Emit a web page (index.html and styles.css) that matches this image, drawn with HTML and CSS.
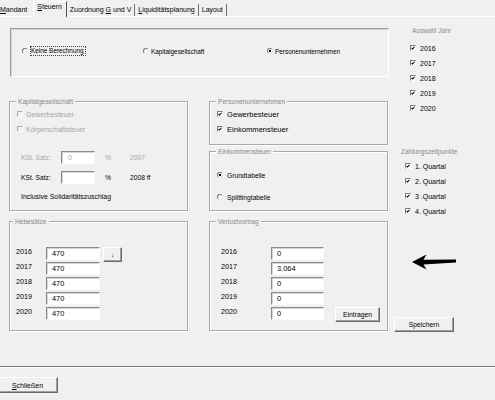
FILE: index.html
```html
<!DOCTYPE html>
<html lang="de">
<head>
  <meta charset="UTF-8">
  <title>Steuern</title>
  <link rel="stylesheet" href="styles.css">
</head>
<body>
  <div class="tabs">
    <div class="tab"><u>M</u>andant</div>
    <div class="tab active"><u>S</u>teuern</div>
    <div class="tab">Zuordnung <u>G</u> und V</div>
    <div class="tab"><u>L</u>iquiditätsplanung</div>
    <div class="tab">Layout</div>
  </div>

  <div class="page">
    <div class="main">
      <!-- Rechtsform -->
      <div class="modes">
        <div class="opt opt-none"><span class="rb"></span><span class="focus">Keine Berechnung</span></div>
        <div class="opt opt-kap"><span class="rb"></span>Kapitalgesellschaft</div>
        <div class="opt"><span class="rb on"></span>Personenunternehmen</div>
      </div>

      <div class="grid">
        <div class="frame kap">
          <span class="frame-title">Kapitalgesellschaft</span>
          <div class="chk off"><span class="cb off"></span>Gewerbesteuer</div>
          <div class="chk off second"><span class="cb off"></span>Körperschaftsteuer</div>
          <div class="kst kst-first off">
            <span class="kst-label">KSt. Satz:</span>
            <span class="tb tb-kst grey">0</span>
            <span class="pct">%</span>
            <span class="kst-year">2007</span>
          </div>
          <div class="kst kst-second">
            <span class="kst-label">KSt. Satz:</span>
            <span class="tb tb-kst"></span>
            <span class="pct">%</span>
            <span class="kst-year">2008 ff</span>
          </div>
          <div class="note">Inclusive Solidaritätszuschlag</div>
        </div>

        <div class="stack">
          <div class="frame pers">
            <span class="frame-title">Personenunternehmen</span>
            <div class="chk"><span class="cb"><svg viewBox="0 0 5 5"><path d="M0.7 2.3 L2 3.8 L4.4 0.9"/></svg></span>Gewerbesteuer</div>
            <div class="chk"><span class="cb"><svg viewBox="0 0 5 5"><path d="M0.7 2.3 L2 3.8 L4.4 0.9"/></svg></span>Einkommensteuer</div>
          </div>
          <div class="frame est">
            <span class="frame-title">Einkommensteuer</span>
            <div class="opt"><span class="rb on"></span>Grundtabelle</div>
            <div class="opt"><span class="rb"></span>Splittingtabelle</div>
          </div>
        </div>

        <div class="frame vals hebe">
          <span class="frame-title">Hebesätze</span>
          <div class="vrow"><span class="yr">2016</span><span class="tb">470</span><button class="btn down">↓</button></div>
          <div class="vrow"><span class="yr">2017</span><span class="tb">470</span></div>
          <div class="vrow"><span class="yr">2018</span><span class="tb">470</span></div>
          <div class="vrow"><span class="yr">2019</span><span class="tb">470</span></div>
          <div class="vrow"><span class="yr">2020</span><span class="tb">470</span></div>
        </div>

        <div class="frame vals verlust">
          <span class="frame-title">Verlustvortrag</span>
          <div class="vrow"><span class="yr">2016</span><span class="tb">0</span></div>
          <div class="vrow"><span class="yr">2017</span><span class="tb">3.064</span></div>
          <div class="vrow"><span class="yr">2018</span><span class="tb">0</span></div>
          <div class="vrow"><span class="yr">2019</span><span class="tb">0</span></div>
          <div class="vrow"><span class="yr">2020</span><span class="tb">0</span><button class="btn enter">Eintragen</button></div>
        </div>
      </div>
    </div>

    <div class="side">
      <div class="side-title t-years">Auswahl Jahr</div>
      <div class="list years">
        <div class="chk"><span class="cb"><svg viewBox="0 0 5 5"><path d="M0.7 2.3 L2 3.8 L4.4 0.9"/></svg></span>2016</div>
        <div class="chk"><span class="cb"><svg viewBox="0 0 5 5"><path d="M0.7 2.3 L2 3.8 L4.4 0.9"/></svg></span>2017</div>
        <div class="chk"><span class="cb"><svg viewBox="0 0 5 5"><path d="M0.7 2.3 L2 3.8 L4.4 0.9"/></svg></span>2018</div>
        <div class="chk"><span class="cb"><svg viewBox="0 0 5 5"><path d="M0.7 2.3 L2 3.8 L4.4 0.9"/></svg></span>2019</div>
        <div class="chk"><span class="cb"><svg viewBox="0 0 5 5"><path d="M0.7 2.3 L2 3.8 L4.4 0.9"/></svg></span>2020</div>
      </div>

      <div class="side-title t-pay">Zahlungszeitpunkte</div>
      <div class="list quarters">
        <div class="chk"><span class="cb"><svg viewBox="0 0 5 5"><path d="M0.7 2.3 L2 3.8 L4.4 0.9"/></svg></span>1. Quartal</div>
        <div class="chk"><span class="cb"><svg viewBox="0 0 5 5"><path d="M0.7 2.3 L2 3.8 L4.4 0.9"/></svg></span>2. Quartal</div>
        <div class="chk"><span class="cb"><svg viewBox="0 0 5 5"><path d="M0.7 2.3 L2 3.8 L4.4 0.9"/></svg></span>3 .Quartal</div>
        <div class="chk"><span class="cb"><svg viewBox="0 0 5 5"><path d="M0.7 2.3 L2 3.8 L4.4 0.9"/></svg></span>4. Quartal</div>
      </div>

      <svg class="arrow" viewBox="0 0 44 16"><path d="M0 8 L14.5 0.5 L11.5 5.8 L44 5.6 L44 8.6 L11.5 10.4 L14.5 15.5 Z"/></svg>

      <button class="btn save">Speichern</button>
    </div>
  </div>

  <div class="footer">
    <button class="btn close"><u>S</u>chließen</button>
  </div>
</body>
</html>
```

FILE: styles.css
```css
body {
  margin: 0;
  width: 495px;
  height: 400px;
  overflow: hidden;
  background: #f0f0f0;
  font-family: "Liberation Sans", Arial, sans-serif;
  font-size: 7px;
  color: #000;
}

/* tab strip */
.tabs {
  display: flex;
  align-items: flex-end;
  height: 16px;
  border-bottom: 1px solid #fff;
}
.tab {
  height: 12px;
  line-height: 11px;
  padding: 0 3px;
  border-right: 1px solid #6e6e6e;
  white-space: nowrap;
}
.tab:first-child {
  padding: 0 6px 0 0;
  border-right: none;
}
.tab.active {
  height: 15px;
  line-height: 9px;
  padding: 0 4px 0 3px;
  margin-bottom: -1px;
  background: #f0f0f0;
  border-top: 1px solid #fff;
  border-left: 1px solid #fff;
  border-right-color: #505050;
}

.page {
  display: flex;
  height: 349px;
}
.main {
  width: 380px;
  padding-left: 9px;
}

/* top radio frame, sunken */
.modes {
  box-sizing: border-box;
  width: 379px;
  height: 49px;
  margin: 11px 0 0 1px;
  padding: 17px 0 0 11px;
  border: 1px solid;
  border-color: #9c9c9c #fff #fff #9c9c9c;
  box-shadow: inset 1px 1px 0 #d4d4d4;
  display: flex;
  align-items: flex-start;
  font-size: 6.4px;
}
.opt {
  display: flex;
  align-items: center;
  gap: 2px;
  height: 10px;
  white-space: nowrap;
}
.opt-none { width: 121px; }
.opt-kap { width: 124px; }
.focus {
  border: 1px dotted #444;
  line-height: 8px;
  padding-right: 1px;
}

/* radio + checkbox */
.rb {
  box-sizing: border-box;
  width: 6px;
  height: 6px;
  flex: none;
  border-radius: 50%;
  background: #fff;
  border: 1px solid;
  border-color: #787878 #e4e4e4 #e4e4e4 #787878;
  display: inline-flex;
  align-items: center;
  justify-content: center;
}
.rb.on::after {
  content: "";
  width: 2px;
  height: 2px;
  background: #000;
}
.cb {
  box-sizing: border-box;
  width: 6px;
  height: 6px;
  flex: none;
  background: #fff;
  border: 1px solid;
  border-color: #7c7c7c #f4f4f4 #f4f4f4 #7c7c7c;
  display: inline-flex;
}
.cb svg {
  width: 4px;
  height: 4px;
  fill: none;
  stroke: #000;
  stroke-width: 1.3;
}
.cb.off {
  background: transparent;
  border-color: #ababab #fff #fff #ababab;
}
.chk {
  display: flex;
  align-items: center;
  gap: 3px;
  height: 10px;
  white-space: nowrap;
}
.off { color: #a6a6a6; }

/* frames */
.grid {
  display: grid;
  grid-template-columns: 179px 179px;
  grid-template-rows: 110px 110px;
  column-gap: 21px;
  row-gap: 10px;
  margin-top: 24px;
}
.frame {
  position: relative;
  box-sizing: border-box;
  border: 1px solid #a9a9a9;
  box-shadow: inset 1px 1px 0 #fff, 1px 1px 0 #fff;
  display: flex;
  flex-direction: column;
  align-items: flex-start;
}
.frame-title {
  position: absolute;
  top: -5px;
  left: 6px;
  padding: 0 2px;
  background: #f0f0f0;
  color: #888;
  font-size: 6.6px;
  line-height: 9px;
  white-space: nowrap;
}
.hebe .frame-title { left: 3px; }

.kap { padding: 7px 0 0 7px; }
.kap .second { margin-top: 5px; }
.kst {
  display: flex;
  align-items: center;
  height: 13px;
  margin-left: 4px;
  font-size: 6.7px;
}
.kst-first { margin-top: 17px; }
.kst-second { margin-top: 7px; }
.kst-label { width: 40px; }
.pct { margin-left: 10px; width: 25px; }
.note {
  margin: 8px 0 0 4px;
  line-height: 10px;
  font-size: 6.9px;
}

.stack {
  display: flex;
  flex-direction: column;
  gap: 6px;
}
.pers {
  height: 44px;
  padding: 7px 0 0 7px;
  gap: 5px;
}
.pers .chk {
  gap: 4px;
  font-size: 7.6px;
}
.est {
  flex: 1;
  padding: 18px 0 0 7px;
  gap: 12px;
  font-size: 6.7px;
}
.est .opt { gap: 4px; }

/* Hebesätze / Verlustvortrag */
.vals {
  padding: 25px 0 0 6px;
  gap: 2px;
}
.verlust { padding-left: 11px; }
.vrow {
  display: flex;
  align-items: flex-start;
  height: 13px;
}
.yr {
  width: 30px;
  line-height: 9px;
  font-size: 7.2px;
}
.verlust .yr { width: 50px; }
.tb {
  box-sizing: border-box;
  width: 54px;
  height: 13px;
  padding-left: 5px;
  background: #fff;
  border: 1px solid;
  border-color: #8a8a8a #fafafa #fafafa #8a8a8a;
  box-shadow: inset 1px 1px 0 #d6d6d6;
  line-height: 11px;
  font-size: 7.4px;
}
.verlust .tb { width: 53px; }
.tb-kst { width: 34px; padding-left: 6px; }
.grey { color: #a6a6a6; }

.btn {
  box-sizing: border-box;
  padding: 0;
  height: 15px;
  background: #f0f0f0;
  border: 1px solid;
  border-color: #fff #6a6a6a #6a6a6a #fff;
  box-shadow: inset -1px -1px 0 #a0a0a0;
  font-family: "Liberation Sans", Arial, sans-serif;
  font-size: 6.8px;
  color: #000;
}
.down {
  width: 19px;
  margin-left: 3px;
  font-size: 6px;
}
.enter {
  width: 45px;
  margin-left: 11px;
}

/* right column */
.side {
  margin-left: 5px;
  display: flex;
  flex-direction: column;
  align-items: flex-start;
}
.side-title {
  font-size: 6.5px;
  line-height: 8px;
  color: #888;
  white-space: nowrap;
}
.t-years { margin: 10px 0 0 18px; }
.list {
  display: flex;
  flex-direction: column;
  gap: 5px;
}
.years { margin: 8px 0 0 16px; }
.years .chk { gap: 4px; }
.t-pay { margin: 35px 0 0 7px; }
.quarters { margin: 5px 0 0 11px; }
.quarters .chk { gap: 4px; }
.arrow {
  width: 44px;
  height: 16px;
  margin: 38px 0 0 18px;
  fill: #000;
}
.save {
  width: 60px;
  margin-top: 47px;
}

/* bottom bar */
.footer {
  border-top: 1px solid #7e7e7e;
  box-shadow: inset 0 1px 0 #fff;
  padding-top: 10px;
}
.close {
  width: 61px;
  height: 16px;
  margin-left: -3px;
  font-size: 7px;
}
```
